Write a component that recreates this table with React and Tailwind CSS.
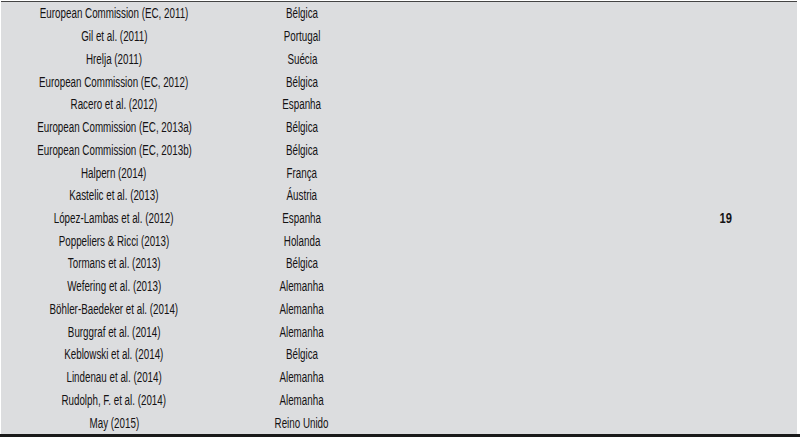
import React from "react";

const rows = [
  ["European Commission (EC, 2011)", "Bélgica"],
  ["Gil et al. (2011)", "Portugal"],
  ["Hrelja (2011)", "Suécia"],
  ["European Commission (EC, 2012)", "Bélgica"],
  ["Racero et al. (2012)", "Espanha"],
  ["European Commission (EC, 2013a)", "Bélgica"],
  ["European Commission (EC, 2013b)", "Bélgica"],
  ["Halpern (2014)", "França"],
  ["Kastelic et al. (2013)", "Áustria"],
  ["López-Lambas et al. (2012)", "Espanha"],
  ["Poppeliers & Ricci (2013)", "Holanda"],
  ["Tormans et al. (2013)", "Bélgica"],
  ["Wefering et al. (2013)", "Alemanha"],
  ["Böhler-Baedeker et al. (2014)", "Alemanha"],
  ["Burggraf et al. (2014)", "Alemanha"],
  ["Keblowski et al. (2014)", "Bélgica"],
  ["Lindenau et al. (2014)", "Alemanha"],
  ["Rudolph, F. et al. (2014)", "Alemanha"],
  ["May (2015)", "Reino Unido"],
];

export default function App() {
  return (
    <div
      className="w-[800px] h-[437px] bg-white flex flex-col text-[#141213] text-[14px] leading-none"
      style={{ fontFamily: '"Liberation Sans", Arial, sans-serif' }}
    >
      <div className="flex-1 pl-[1px] pr-[3px] pt-[1px] flex">
        <div className="flex-1 bg-[#dcdddf] border-t border-[#444] grid grid-cols-[226px_150px_1fr_142px] grid-rows-[repeat(19,1fr)]">
          {rows.map(([ref, country], i) => (
            <React.Fragment key={i}>
              <div className="flex items-center justify-center" style={{ gridRow: i + 1, gridColumn: 1 }}>
                <span className="inline-block whitespace-nowrap scale-x-[0.7]">{ref}</span>
              </div>
              <div className="flex items-center justify-center" style={{ gridRow: i + 1, gridColumn: 2 }}>
                <span className="inline-block whitespace-nowrap scale-x-[0.7]">{country}</span>
              </div>
            </React.Fragment>
          ))}
          <div className="col-start-4 row-start-1 row-span-19 flex items-center justify-center font-bold text-[14px]">
            <span className="inline-block scale-x-[0.8]">19</span>
          </div>
        </div>
      </div>
      <div className="h-[3px] bg-[#1a1a1a]" />
    </div>
  );
}
